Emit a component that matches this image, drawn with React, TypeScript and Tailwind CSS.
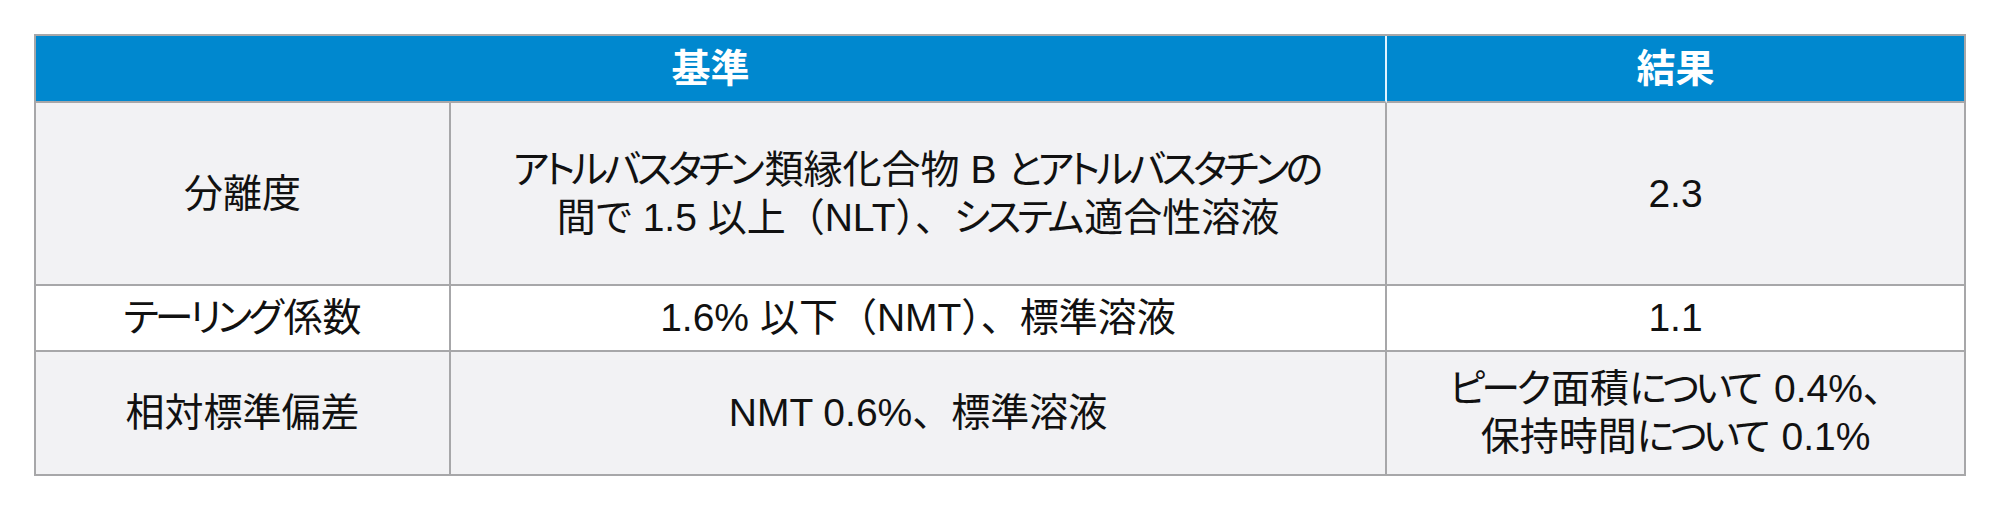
const rows = [
  {
    label: "分離度",
    criteria: ["アトルバスタチン類縁化合物 B とアトルバスタチンの", "間で 1.5 以上（NLT）、システム適合性溶液"],
    result: ["2.3"],
    height: "h-[183px]",
    bg: "bg-[#f2f2f4]",
  },
  {
    label: "テーリング係数",
    criteria: ["1.6% 以下（NMT）、標準溶液"],
    result: ["1.1"],
    height: "h-[66px]",
    bg: "bg-white",
  },
  {
    label: "相対標準偏差",
    criteria: ["NMT 0.6%、標準溶液"],
    result: ["ピーク面積について 0.4%、", "保持時間について 0.1%"],
    height: "h-[124px]",
    bg: "bg-[#f2f2f4]",
  },
];

const cell = "border-r-2 border-b-2 border-[#a7a7a9] text-center align-middle";

// kana are set narrow and proportional; brackets and commas keep full width
function Line({ text }: { text: string }) {
  const parts = text.split(/([\u3041-\u30ff]+)/).filter(Boolean);
  return (
    <div>
      {parts.map((p, i) =>
        /^[\u3041-\u30ff]+$/.test(p) ? (
          <span key={i} className="[font-feature-settings:'palt'] tracking-[-0.1em] mr-[0.1em]">
            {p}
          </span>
        ) : (
          <span key={i}>{p}</span>
        )
      )}
    </div>
  );
}

export default function App() {
  return (
    <div className="w-[2000px] h-[520px] bg-white pl-[34px] pt-[34px] font-['Liberation_Sans','Noto_Sans_CJK_JP',sans-serif] text-[39px] leading-[48px] text-[#111111]">
      <table className="table-fixed w-[1932px] border-separate border-spacing-0 border-l-2 border-t-2 border-[#a7a7a9]">
        <colgroup>
          <col className="w-[415px]" />
          <col className="w-[936px]" />
          <col />
        </colgroup>
        <thead>
          <tr className="h-[67px] bg-[#0088cf] text-white font-bold">
            <th colSpan={2} className="border-r-2 border-b-2 border-r-[#dff3ff] border-b-[#a7a7a9] text-center align-middle">
              基準
            </th>
            <th className={cell}>結果</th>
          </tr>
        </thead>
        <tbody>
          {rows.map((row) => (
            <tr key={row.label} className={`${row.height} ${row.bg}`}>
              <td className={cell}>
                <Line text={row.label} />
              </td>
              <td className={cell}>
                {row.criteria.map((line) => (
                  <Line key={line} text={line} />
                ))}
              </td>
              <td className={cell}>
                {row.result.map((line) => (
                  <Line key={line} text={line} />
                ))}
              </td>
            </tr>
          ))}
        </tbody>
      </table>
    </div>
  );
}
